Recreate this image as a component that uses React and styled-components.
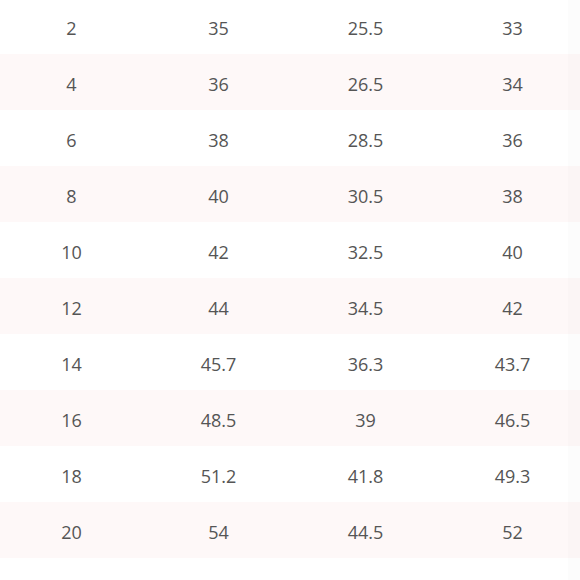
import React from "react";
import styled, { createGlobalStyle } from "styled-components";

const rows = [
  ["2", "35", "25.5", "33"],
  ["4", "36", "26.5", "34"],
  ["6", "38", "28.5", "36"],
  ["8", "40", "30.5", "38"],
  ["10", "42", "32.5", "40"],
  ["12", "44", "34.5", "42"],
  ["14", "45.7", "36.3", "43.7"],
  ["16", "48.5", "39", "46.5"],
  ["18", "51.2", "41.8", "49.3"],
  ["20", "54", "44.5", "52"],
];

const GlobalStyle = createGlobalStyle`
  html, body {
    margin: 0;
    padding: 0;
    background: #ffffff;
    overflow: hidden;
  }
`;

const Page = styled.div`
  position: relative;
  width: 580px;
  height: 580px;
  overflow: hidden;
  background: #ffffff;
`;

const Table = styled.table`
  border-collapse: collapse;
  table-layout: fixed;
  width: 588px;
  margin: -3px 0 0 -2px;
  border-top: 1px solid #efefef;
  font-family: "Open Sans", "Liberation Sans", sans-serif;
  font-size: 18px;
  color: #555555;
`;

const Row = styled.tr`
  height: 56px;
  background: ${({ $shaded }) => ($shaded ? "#fef8f8" : "#ffffff")};
`;

const Cell = styled.td`
  padding: 4px 0 0;
  text-align: center;
  vertical-align: middle;
`;

const EdgeShade = styled.div`
  position: absolute;
  top: 0;
  right: 0;
  width: 12px;
  height: 100%;
  background: rgba(0, 0, 0, 0.012);
`;

export default function App() {
  return (
    <Page>
      <GlobalStyle />
      <Table>
        <tbody>
          {rows.map((r, i) => (
            <Row key={i} $shaded={i % 2 === 1}>
              {r.map((v, j) => (
                <Cell key={j}>{v}</Cell>
              ))}
            </Row>
          ))}
        </tbody>
      </Table>
      <EdgeShade />
    </Page>
  );
}
